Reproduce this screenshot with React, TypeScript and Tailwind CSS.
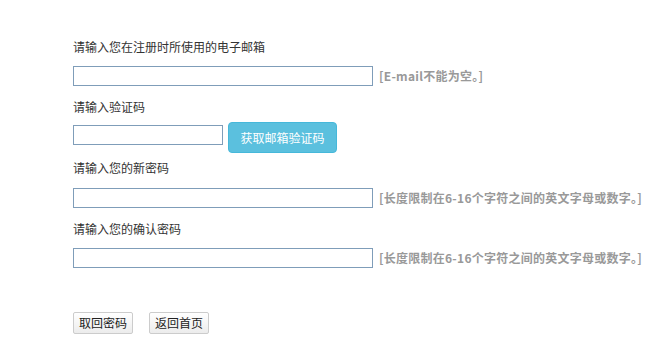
import React from "react";

const font = { fontFamily: '"Microsoft YaHei", "Noto Sans CJK SC", "Liberation Sans", sans-serif' };

const Hint: React.FC<{ text: string }> = ({ text }) => (
  <span className="ml-[6px] text-[12px] font-bold tracking-[0.25px] text-[#999999]">{text}</span>
);

export default function App() {
  return (
    <div className="w-[661px] h-[345px] bg-white text-[#333333] text-[12px]" style={font}>
      <div className="pl-[73px] pt-[37px]">
        <div className="h-[20px] leading-[20px]">请输入您在注册时所使用的电子邮箱</div>
        <div className="mt-[9px] flex items-center h-[20px]">
          <input type="text" className="w-[300px] h-[20px] border border-[#7f9db9] bg-white outline-none" />
          <Hint text="[E-mail不能为空。]" />
        </div>

        <div className="mt-[11px] h-[20px] leading-[20px]">请输入验证码</div>
        <div className="mt-[5px] flex items-start">
          <input type="text" className="mt-[3px] w-[150px] h-[20px] border border-[#7f9db9] bg-white outline-none" />
          <button className="ml-[5px] w-[109px] h-[31px] rounded-[4px] border border-[#46b8da] bg-[#5bc0de] text-white text-[12px]">
            获取邮箱验证码
          </button>
        </div>

        <div className="mt-[5px] h-[20px] leading-[20px]">请输入您的新密码</div>
        <div className="mt-[10px] flex items-center h-[20px]">
          <input type="password" className="w-[300px] h-[20px] border border-[#7f9db9] bg-white outline-none" />
          <Hint text="[长度限制在6-16个字符之间的英文字母或数字。]" />
        </div>

        <div className="mt-[11px] h-[20px] leading-[20px]">请输入您的确认密码</div>
        <div className="mt-[9px] flex items-center h-[20px]">
          <input type="password" className="w-[300px] h-[20px] border border-[#7f9db9] bg-white outline-none" />
          <Hint text="[长度限制在6-16个字符之间的英文字母或数字。]" />
        </div>

        <div className="mt-[44px] flex gap-[16px]">
          <button className="w-[60px] h-[22px] border border-[#cccccc] rounded-[2px] bg-gradient-to-b from-white to-[#ececec] text-[12px] text-[#222222]">
            取回密码
          </button>
          <button className="w-[60px] h-[22px] border border-[#cccccc] rounded-[2px] bg-gradient-to-b from-white to-[#ececec] text-[12px] text-[#222222]">
            返回首页
          </button>
        </div>
      </div>
    </div>
  );
}
